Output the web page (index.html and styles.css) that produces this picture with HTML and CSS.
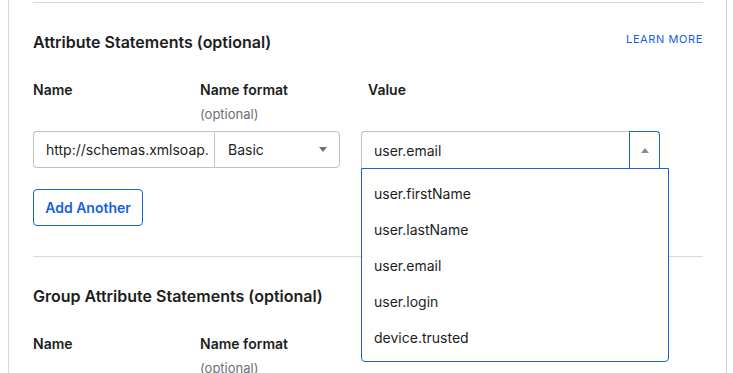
FILE: index.html
```html
<!DOCTYPE html>
<html lang="en">
<head>
    <meta charset="UTF-8">
    <meta name="viewport" content="width=device-width, initial-scale=1.0">
    <title>Attribute Statements</title>
    <link rel="stylesheet" href="styles.css">
</head>
<body>
    <div class="panel">
        <section class="section">
            <div class="section-head">
                <h2 class="section-title">Attribute Statements (optional)</h2>
                <a class="learn-more" href="#">Learn more</a>
            </div>

            <div class="labels">
                <div class="label">Name</div>
                <div class="label">Name format<span class="hint">(optional)</span></div>
                <div class="label">Value</div>
            </div>

            <div class="row">
                <div class="name-group">
                    <div class="field name-field">http://schemas.xmlsoap.</div>
                    <div class="field format-field">Basic<span class="caret-down"></span></div>
                </div>
                <div class="combo">
                    <div class="field value-field">user.email</div>
                    <div class="trigger"><span class="caret-up"></span></div>
                    <ul class="dropdown">
                        <li>user.firstName</li>
                        <li>user.lastName</li>
                        <li>user.email</li>
                        <li>user.login</li>
                        <li>device.trusted</li>
                    </ul>
                </div>
            </div>

            <button class="add-btn">Add Another</button>
        </section>

        <section class="section">
            <div class="section-head">
                <h2 class="section-title">Group Attribute Statements (optional)</h2>
            </div>

            <div class="labels">
                <div class="label">Name</div>
                <div class="label">Name format<span class="hint">(optional)</span></div>
                <div class="label">Value</div>
            </div>
        </section>
    </div>
</body>
</html>
```

FILE: styles.css
```css
body {
    margin: 0;
    background-color: #fff;
    font-family: 'Inter', 'Noto Sans', sans-serif;
    color: #1d1d21;
    overflow: hidden;
}

.panel {
    margin-left: 8px;
    width: 719px;
    height: 373px;
    padding: 2px 23px 0 24px;
    box-sizing: border-box;
    border-left: 1px solid #d7d7dc;
    border-right: 1px solid #d7d7dc;
}

.section {
    border-top: 1px solid #d7d7dc;
    padding: 29px 0 30px;
}

.section-head {
    display: flex;
    justify-content: space-between;
    align-items: center;
    height: 20px;
}

.section-title {
    margin: 0;
    font-size: 16px;
    font-weight: 600;
    line-height: 20px;
}

.learn-more {
    color: #1662dd;
    font-size: 11px;
    text-transform: uppercase;
    text-decoration: none;
    letter-spacing: 0.6px;
    margin-top: -6px;
}

.labels {
    display: grid;
    grid-template-columns: 167px 168px 1fr;
    margin-top: 28px;
}

.label {
    font-size: 14px;
    font-weight: 600;
    line-height: 20px;
}

.hint {
    display: block;
    margin-top: 4px;
    font-weight: 400;
    font-size: 13px;
    color: #6e6e78;
}

.row {
    display: flex;
    gap: 21px;
    margin-top: 7px;
}

.name-group {
    display: flex;
}

.field {
    height: 37px;
    box-sizing: border-box;
    border: 1px solid #c1c1c8;
    display: flex;
    align-items: center;
    font-size: 14px;
    color: #1d1d21;
}

.name-field {
    width: 181px;
    padding-left: 12px;
    border-radius: 4px 0 0 4px;
    border-right: none;
    white-space: nowrap;
    overflow: hidden;
}

.format-field {
    width: 126px;
    padding: 0 12px 0 13px;
    border-radius: 0 4px 4px 0;
    justify-content: space-between;
}

.caret-down {
    width: 0;
    height: 0;
    border-left: 4px solid transparent;
    border-right: 4px solid transparent;
    border-top: 5px solid #6e6e78;
}

.combo {
    position: relative;
    display: flex;
}

.value-field {
    width: 268px;
    padding-left: 12px;
    border-right: none;
    border-bottom: none;
    border-radius: 4px 0 0 0;
}

.trigger {
    width: 31px;
    height: 37px;
    box-sizing: border-box;
    border: 1px solid #1662dd;
    border-bottom: none;
    border-radius: 0 4px 0 0;
    display: flex;
    align-items: center;
    justify-content: center;
}

.caret-up {
    width: 0;
    height: 0;
    border-left: 4px solid transparent;
    border-right: 4px solid transparent;
    border-bottom: 5px solid #8a8a94;
}

.dropdown {
    position: absolute;
    left: 0;
    top: 37px;
    width: 308px;
    box-sizing: border-box;
    margin: 0;
    padding: 7px 0 5px;
    list-style: none;
    background-color: #fff;
    border: 1px solid #1662dd;
    border-radius: 0 0 4px 4px;
    z-index: 2;
}

.dropdown li {
    height: 36px;
    line-height: 36px;
    padding-left: 12px;
    font-size: 14px;
    color: #1d1d21;
}

.add-btn {
    margin-top: 21px;
    height: 37px;
    width: 110px;
    background-color: #fff;
    border: 1px solid #1662dd;
    border-radius: 4px;
    color: #1662dd;
    font-family: inherit;
    font-size: 14px;
    font-weight: 600;
    padding: 0;
    cursor: pointer;
}
```
